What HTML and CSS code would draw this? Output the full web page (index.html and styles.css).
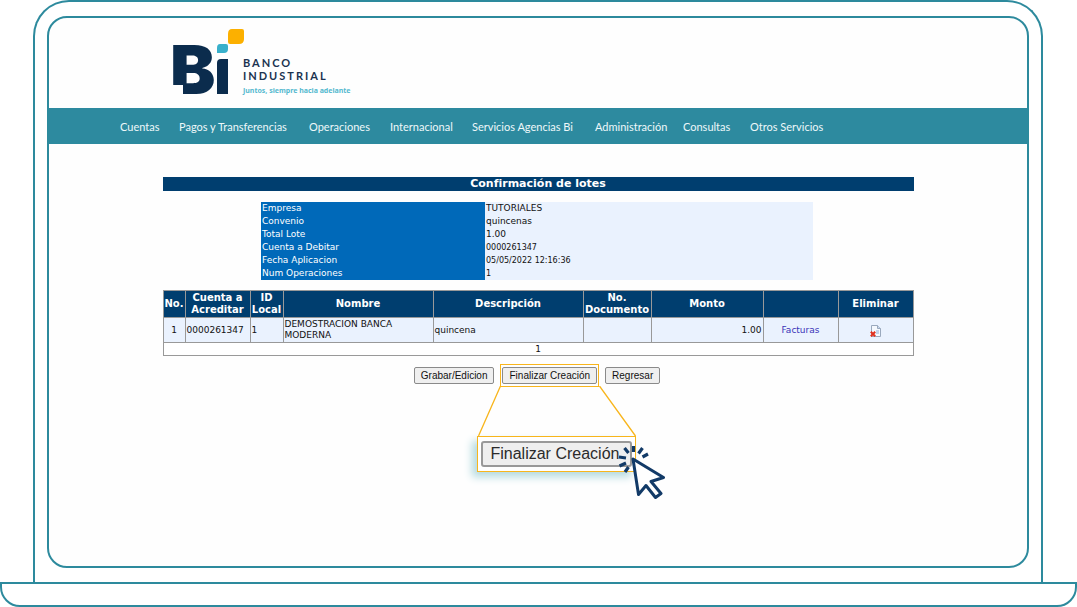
FILE: index.html
```html
<!DOCTYPE html>
<html lang="es">
<head>
<meta charset="utf-8">
<title>Banco Industrial - Confirmación de lotes</title>
<link rel="stylesheet" href="styles.css">
</head>
<body>
<div class="laptop">
  <div class="lid">
    <div class="screen">
      <header class="brand">
        <svg class="brand-mark" width="74" height="68" viewBox="0 0 74 68" role="img" aria-label="Bi">
          <text class="brand-letter" x="-3" y="64">B</text>
          <path fill="#fefefe" d="M-1 55h11v10H-1z"/>
          <path fill="#0b2c4d" d="M48 29h7v35H44V33q0-4 4-4z"/>
          <path fill="#39b0cb" d="M47 14h6q2 0 2 2v3q0 4-4 4h-7v-5q0-4 3-4z"/>
          <path fill="#fcb000" d="M59-1h10q2 0 2 2v8q0 5-5 5H57q-2 0-2-2V4q0-5 4-5z"/>
        </svg>
        <div class="brand-text">
          <span class="brand-name">BANCO<br>INDUSTRIAL</span>
          <span class="brand-tag">Juntos, siempre hacia adelante</span>
        </div>
      </header>
      <nav class="menu">
        <a href="#">Cuentas</a>
        <a href="#">Pagos y Transferencias</a>
        <a href="#">Operaciones</a>
        <a href="#">Internacional</a>
        <a href="#">Servicios Agencias Bi</a>
        <a href="#">Administración</a>
        <a href="#">Consultas</a>
        <a href="#">Otros Servicios</a>
      </nav>
      <main class="content">
        <h1 class="title">Confirmación de lotes</h1>
        <table class="summary">
          <tr><th scope="row">Empresa</th><td>TUTORIALES</td></tr>
          <tr><th scope="row">Convenio</th><td>quincenas</td></tr>
          <tr><th scope="row">Total Lote</th><td>1.00</td></tr>
          <tr><th scope="row">Cuenta a Debitar</th><td class="small">0000261347</td></tr>
          <tr><th scope="row">Fecha Aplicacion</th><td class="small">05/05/2022 12:16:36</td></tr>
          <tr><th scope="row">Num Operaciones</th><td class="small">1</td></tr>
        </table>
        <table class="lots">
          <colgroup>
            <col class="c-no"><col class="c-account"><col class="c-id"><col class="c-name"><col class="c-name">
            <col class="c-doc"><col class="c-amount"><col class="c-action"><col class="c-action">
          </colgroup>
          <thead>
            <tr><th>No.</th><th>Cuenta a Acreditar</th><th>ID Local</th><th>Nombre</th><th>Descripción</th><th>No. Documento</th><th>Monto</th><th></th><th>Eliminar</th></tr>
          </thead>
          <tbody>
            <tr>
              <td class="center">1</td><td>0000261347</td><td>1</td><td>DEMOSTRACION BANCA MODERNA</td><td>quincena</td><td></td>
              <td class="right">1.00</td>
              <td class="center"><a href="#">Facturas</a></td>
              <td class="center">
                <button class="delete" type="button" aria-label="Eliminar">
                  <svg width="11" height="12" viewBox="0 0 11 12">
                    <path d="M1.500.5h6l3 3v8h-9z" fill="#f4f8fd" stroke="#9aa9bd"/>
                    <path d="M7.500.5v3h3" fill="#c9daf0" stroke="#9aa9bd"/>
                    <path d="M6 6h3M6 8h3" stroke="#8fb0dc"/>
                    <path d="M.8 6.800l4.400 4.400M5.200 6.800L.8 11.200" stroke="#e0301e" stroke-width="2"/>
                  </svg>
                </button>
              </td>
            </tr>
            <tr class="pager"><td colspan="9">1</td></tr>
          </tbody>
        </table>
        <div class="actions">
          <button class="btn" type="button">Grabar/Edicion</button>
          <div class="highlight">
            <button class="btn" type="button">Finalizar Creación</button>
            <svg class="rays" width="160" height="52" viewBox="0 0 160 52">
              <path d="M22.500 0L.5 50M121.500 0l36 50" fill="none" stroke="#f8b51c" stroke-width="1.300"/>
            </svg>
            <div class="magnified">
              <button class="btn-large" type="button">Finalizar Creación</button>
              <svg class="cursor" width="48" height="54" viewBox="0 0 48 54">
                <g fill="none" stroke="#123a67">
                  <path fill="#fff" stroke-width="3" d="M15 14l30.500 18.500-12.500 4 10 12-5.500 4-9.500-12-7.500 9z" stroke-linejoin="round"/>
                  <path stroke-width="3.200" d="M6.500 3l4 5M15.500 1v6M24.500 3l-4 5.500M30 9l-5.500 3M1 12l7 1M1.500 21l6.500-3M7 27l3.500-5"/>
                </g>
              </svg>
            </div>
          </div>
          <button class="btn" type="button">Regresar</button>
        </div>
      </main>
    </div>
  </div>
  <div class="base"></div>
</div>
</body>
</html>
```
FILE: styles.css
```css
* { box-sizing: border-box; }

body {
  margin: 0;
  background: #fff;
  color: #111;
  font-family: "DejaVu Sans", sans-serif;
  font-size: 9px;
}

.laptop {
  display: flex;
  flex-direction: column;
  min-height: 100vh;
}

.lid {
  flex: 1;
  display: flex;
  margin: 0 34px 0 33px;
  padding: 14px 12px;
  border: 2px solid #2d8a9d;
  border-bottom: 0;
  border-radius: 36px 36px 0 0;
}

.screen {
  flex: 1;
  border: 2px solid #2d8a9d;
  border-radius: 20px;
  background: #fefefe;
  overflow: hidden;
}

.base {
  height: 25px;
  border: 2px solid #2d8a9d;
  border-radius: 0 0 20px 20px;
}

.brand {
  display: flex;
  height: 90px;
  padding: 12px 124px 0;
}

.brand-mark { overflow: visible; }

.brand-letter {
  fill: #0b2c4d;
  font-family: Inter, sans-serif;
  font-size: 68px;
  font-weight: 900;
}

.brand-text {
  display: flex;
  flex-direction: column;
  padding-top: 26px;
  margin-left: -4px;
}

.brand-name {
  color: #1b3350;
  font-family: Lato, sans-serif;
  font-size: 11px;
  font-weight: 700;
  letter-spacing: 2px;
  line-height: 13px;
}

.brand-tag {
  margin-top: 4px;
  color: #55b9cf;
  font-family: "Noto Sans", sans-serif;
  font-size: 7px;
  font-weight: 700;
  line-height: 10px;
  white-space: nowrap;
}

.menu {
  display: grid;
  grid-template-columns: 59px 130px 81px 82px 123px 88px 67px 1fr;
  align-items: center;
  height: 36px;
  padding: 2px 71px 0;
  background: #2d8a9f;
}

.menu a {
  color: #eef8fa;
  font-family: Lato, sans-serif;
  font-size: 11px;
  line-height: 14px;
  text-decoration: none;
  white-space: nowrap;
}

.content {
  display: flex;
  flex-direction: column;
  align-items: center;
  max-width: 751px;
  margin: 33px auto 0;
}

.title {
  width: 100%;
  margin: 0;
  background: #003e6f;
  color: #fff;
  font-size: 11px;
  line-height: 14px;
  text-align: center;
}

.summary {
  width: 552px;
  margin: 11px 2px 0 0;
  border-collapse: collapse;
  background: #eaf2fe;
}

.summary th {
  width: 224px;
  padding: 0 1px;
  background: #0069b9;
  color: #fff;
  font-weight: 400;
  line-height: 13px;
  text-align: left;
}

.summary td {
  padding: 0 1px;
  line-height: 13px;
}

.summary .small { font-size: 8px; }

.lots {
  width: 750px;
  margin-top: 10px;
  border-collapse: collapse;
  table-layout: fixed;
}

.c-no { width: 22px; }
.c-account { width: 65px; }
.c-id { width: 33px; }
.c-name { width: 150px; }
.c-doc { width: 68px; }
.c-amount { width: 112px; }
.c-action { width: 75px; }

.lots th,
.lots td {
  padding: 0 1px;
  border: 1px solid #999;
}

.lots th {
  height: 27px;
  padding: 0;
  background: #003e6f;
  color: #fff;
  font-size: 10px;
  line-height: 12px;
}

.lots td {
  height: 25px;
  background: #eaf2fe;
  line-height: 11px;
}

.lots .center { text-align: center; }
.lots .right { text-align: right; }

.lots a {
  color: #3a34b8;
  text-decoration: none;
}

.lots .pager td {
  height: 13px;
  background: #fff;
  text-align: center;
}

.delete {
  display: block;
  margin: 2px auto 0;
  padding: 0;
  border: 0;
  background: none;
}

.delete svg { display: block; }

.actions {
  display: flex;
  align-items: center;
  gap: 6px;
  margin: 8px 2px 0 0;
}

.btn {
  display: block;
  height: 17px;
  padding: 0 6px;
  border: 1px solid #8a8a8a;
  border-radius: 2px;
  background: #efefef;
  color: #111;
  font-family: "Liberation Sans", Arial, sans-serif;
  font-size: 10px;
  line-height: 14px;
  white-space: nowrap;
}

.highlight {
  position: relative;
  padding: 2px 1px;
  border: 1px solid #f8b51c;
}

.rays {
  position: absolute;
  top: 21px;
  left: -23px;
}

.magnified {
  position: absolute;
  top: 71px;
  left: -24px;
  padding: 4px 3px;
  border: 1px solid #f8b51c;
  background: #fff;
  box-shadow: -5px 5px 8px #b5dadf;
}

.btn-large {
  display: block;
  height: 26px;
  padding: 0 11px 0 7px;
  border: 2px solid #999;
  border-radius: 3px;
  background: #efefef;
  color: #2b2b2b;
  font-family: "Liberation Sans", Arial, sans-serif;
  font-size: 16px;
  line-height: 22px;
  white-space: nowrap;
}

.cursor {
  position: absolute;
  top: 8px;
  right: -31px;
}
```
